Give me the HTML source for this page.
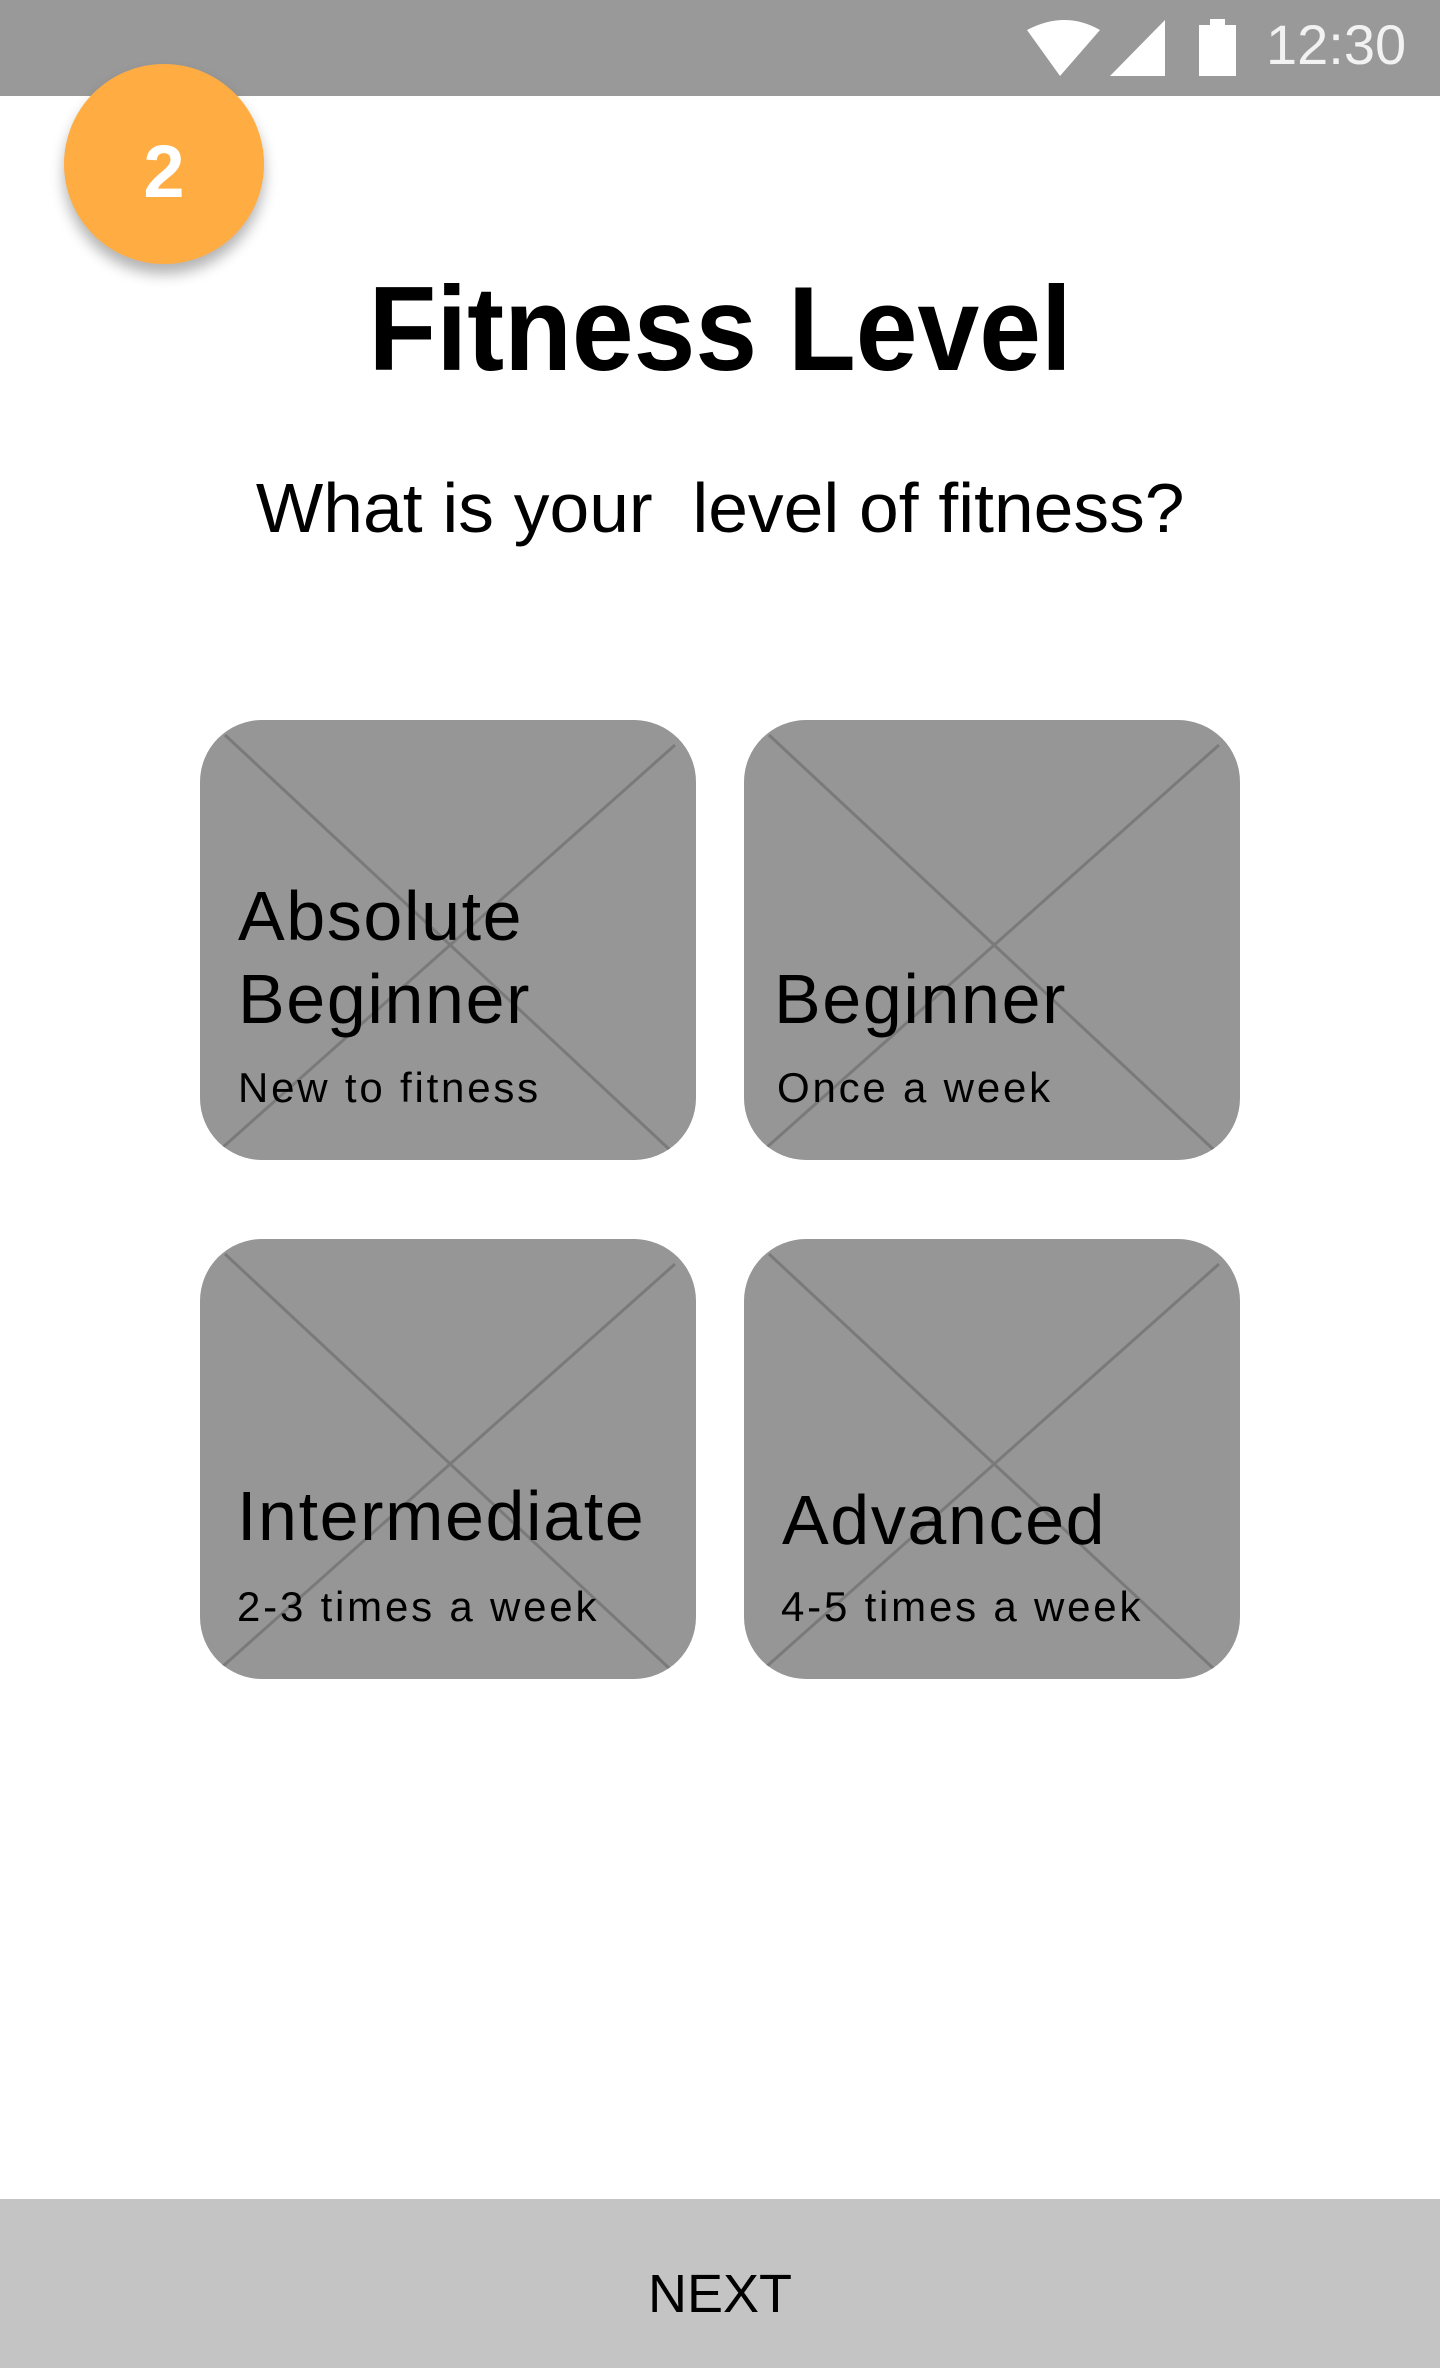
<!DOCTYPE html>
<html><head><meta charset="utf-8"><style>
*{margin:0;padding:0;box-sizing:border-box}
body{width:1440px;height:2368px;position:relative;background:#fff;font-family:"Liberation Sans",sans-serif;overflow:hidden}
.abs{position:absolute;line-height:1;white-space:nowrap}
.card{position:absolute;width:496px;height:440px;background:#969696;border-radius:62px;overflow:hidden}
.card svg{position:absolute;left:0;top:0}
.t{position:absolute;font-size:70px;line-height:1;color:#000;white-space:nowrap;letter-spacing:1.6px}
.s{position:absolute;font-size:42px;line-height:1;color:#000;white-space:nowrap;letter-spacing:2.8px}
</style></head><body>
<div style="position:absolute;left:0;top:0;width:1440px;height:96px;background:#999"></div>
<svg style="position:absolute;left:1020px;top:18px" width="225" height="60" viewBox="0 0 225 60">
<path d="M7 12 Q45 -8 80 12 L40 58 Z" fill="#fff"/>
<path d="M145 2 L145 58 L90 58 Z" fill="#fff"/>
<rect x="179" y="7" width="37" height="51" fill="#fff"/>
<rect x="190" y="1" width="15" height="8" fill="#fff"/>
</svg>
<div class="abs" style="left:1266px;top:17px;font-size:56px;color:#f2f2f2">12:30</div>

<div style="position:absolute;left:64px;top:64px;width:200px;height:200px;border-radius:50%;background:#ffad42;box-shadow:0 10px 14px rgba(0,0,0,0.3)"></div>
<div class="abs" style="left:64px;width:200px;text-align:center;top:135px;font-size:74px;color:#fff;font-weight:bold">2</div>

<div class="abs" style="left:0;width:1440px;text-align:center;top:269px;font-size:120px;font-weight:bold;color:#000"><span style="display:inline-block;transform:scaleX(0.925)">Fitness Level</span></div>
<div class="abs" style="left:0;width:1440px;text-align:center;top:473px;font-size:70px;color:#000"><span style="display:inline-block;transform:scaleX(1.02)">What is your&nbsp; level of fitness?</span></div>

<div class="card" style="left:200px;top:720px">
<svg width="496" height="440"><line x1="25" y1="15" x2="470" y2="430" stroke="#7a7a7a" stroke-width="3"/><line x1="475" y1="25" x2="22" y2="428" stroke="#7a7a7a" stroke-width="3"/></svg>
<div class="t" style="left:38px;top:161px">Absolute</div>
<div class="t" style="left:38px;top:244px">Beginner</div>
<div class="s" style="left:38px;top:347px">New to fitness</div>
</div>
<div class="card" style="left:744px;top:720px">
<svg width="496" height="440"><line x1="25" y1="15" x2="470" y2="430" stroke="#7a7a7a" stroke-width="3"/><line x1="475" y1="25" x2="22" y2="428" stroke="#7a7a7a" stroke-width="3"/></svg>
<div class="t" style="left:30px;top:244px">Beginner</div>
<div class="s" style="left:33px;top:347px">Once a week</div>
</div>
<div class="card" style="left:200px;top:1239px">
<svg width="496" height="440"><line x1="25" y1="15" x2="470" y2="430" stroke="#7a7a7a" stroke-width="3"/><line x1="475" y1="25" x2="22" y2="428" stroke="#7a7a7a" stroke-width="3"/></svg>
<div class="t" style="left:37px;top:242px">Intermediate</div>
<div class="s" style="left:37px;top:347px">2-3 times a week</div>
</div>
<div class="card" style="left:744px;top:1239px">
<svg width="496" height="440"><line x1="25" y1="15" x2="470" y2="430" stroke="#7a7a7a" stroke-width="3"/><line x1="475" y1="25" x2="22" y2="428" stroke="#7a7a7a" stroke-width="3"/></svg>
<div class="t" style="left:38px;top:246px">Advanced</div>
<div class="s" style="left:37px;top:347px">4-5 times a week</div>
</div>

<div style="position:absolute;left:0;top:2199px;width:1440px;height:169px;background:#c4c4c4"></div>
<div class="abs" style="left:0;width:1440px;text-align:center;top:2267px;font-size:54px;color:#000">NEXT</div>
</body></html>
